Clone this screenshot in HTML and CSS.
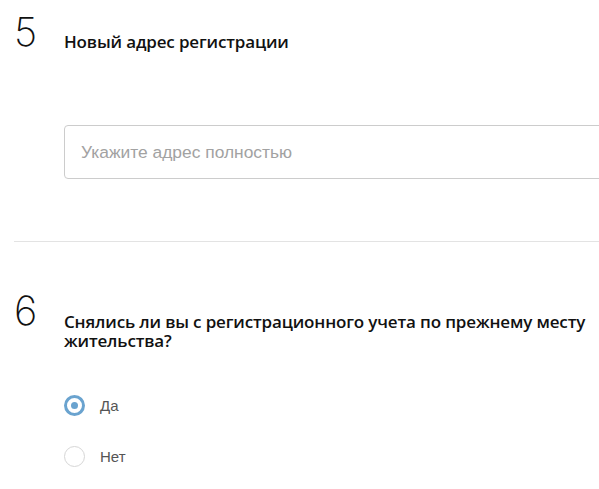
FILE: index.html
```html
<!DOCTYPE html>
<html lang="ru">
<head>
<meta charset="utf-8">
<link rel="stylesheet" href="styles.css">
</head>
<body>
<section class="step">
  <div class="num">5</div>
  <div class="body">
    <h2 class="title">Новый адрес регистрации</h2>
    <div class="field"><input class="input" type="text" placeholder="Укажите адрес полностью"></div>
  </div>
</section>
<hr class="divider">
<section class="step step2">
  <div class="num">6</div>
  <div class="body">
    <h2 class="title">Снялись ли вы с регистрационного учета по прежнему месту жительства?</h2>
    <div class="options">
      <label class="option"><span class="radio checked"></span><span class="label">Да</span></label>
      <label class="option"><span class="radio"></span><span class="label">Нет</span></label>
    </div>
  </div>
</section>
</body>
</html>
```
FILE: styles.css
```css
html, body { margin: 0; padding: 0; background: #fff; }
body { width: 599px; overflow: hidden; font-family: "Open Sans", "Liberation Sans", sans-serif; }
.step { display: flex; padding-left: 14px; }
.num {
  width: 50px; flex: none;
  font-family: Inter, "Liberation Sans", sans-serif;
  font-weight: 200; font-size: 40px; line-height: 40px;
  color: #111; margin-top: 12px;
}
.body { flex: 1; min-width: 0; }
.title {
  margin: 0; font-size: 17px; font-weight: 600; line-height: 19px;
  color: #111; padding-top: 32px; letter-spacing: -0.15px;
}
.field { margin-top: 74px; margin-right: -10px; }
.input {
  box-sizing: border-box; width: 100%; height: 54px; display: block;
  border: 1px solid #ccc; border-radius: 4px; padding: 0 16px;
  font-family: "Liberation Sans", Arial, sans-serif; font-size: 17.4px; color: #333;
  outline: none;
}
.input::placeholder { color: #a2a2a2; }
.divider { border: 0; border-top: 1px solid #e3e3e3; margin: 62px 0 0 14px; }
.step2 .num { margin-top: 49px; }
.step2 .title { padding-top: 70px; }
.options { margin-top: 45px; display: flex; flex-direction: column; gap: 30px; }
.option { display: flex; align-items: center; gap: 15px; height: 21px; }
.radio {
  width: 21px; height: 21px; box-sizing: border-box; border-radius: 50%;
  border: 1px solid #d6d6d6; background: #fff; position: relative; flex: none;
}
.radio.checked { border: 3px solid #6aa3cf; }
.radio.checked::after {
  content: ""; position: absolute; left: 50%; top: 50%; width: 7px; height: 7px;
  margin: -3.5px 0 0 -3.5px; border-radius: 50%; background: #6aa3cf;
}
.label { font-family: "Liberation Sans", Arial, sans-serif; font-size: 15px; color: #555; }
```
